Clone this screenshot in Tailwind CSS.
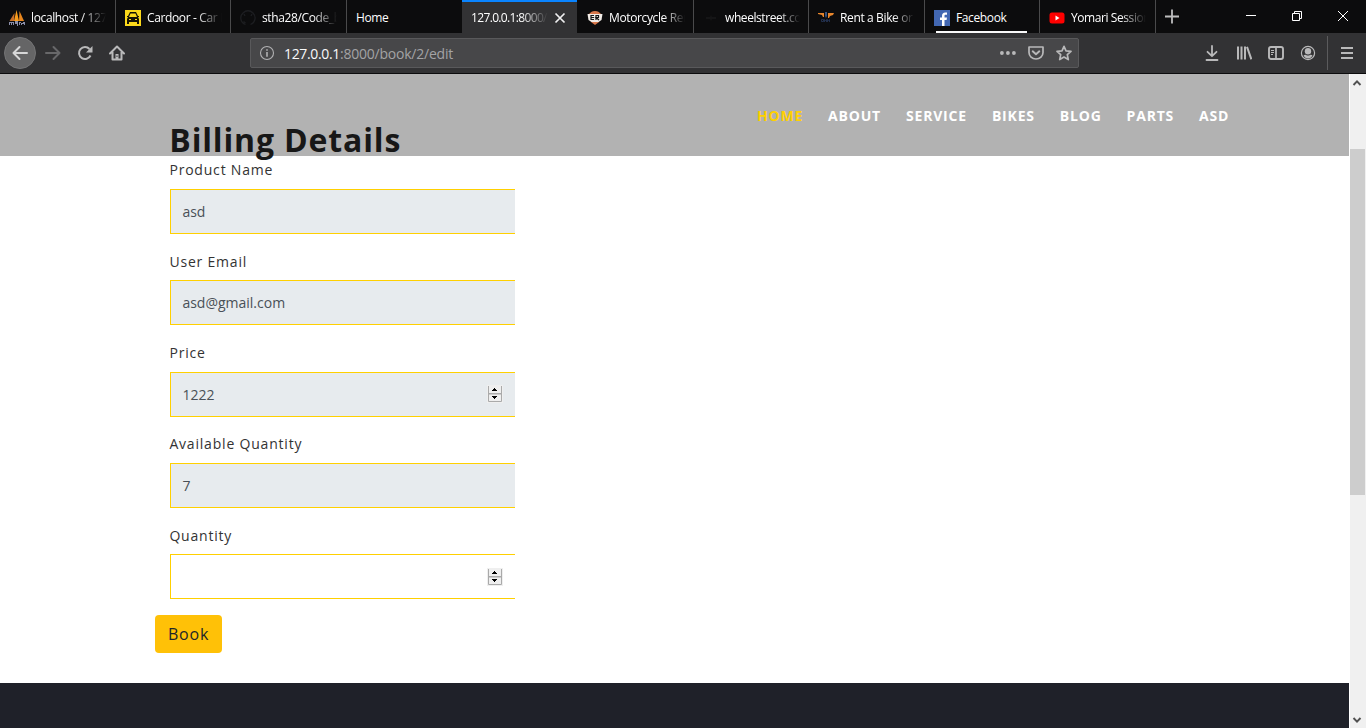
<!DOCTYPE html>
<html lang="en">
<head>
<meta charset="utf-8">
<title>Billing Details</title>
<script src="https://cdn.jsdelivr.net/npm/@tailwindcss/browser@4"></script>
</head>
<body class="w-[1366px] h-[728px] overflow-hidden flex flex-col bg-white font-['Open_Sans','Noto_Sans',sans-serif]">

<!-- Tab strip -->
<div class="h-[33px] shrink-0 flex bg-[#0c0c0d] text-white text-[12px] tracking-[-0.37px] whitespace-nowrap">
  <div class="w-[116px] shrink-0 border-r border-[#4a4a4b] flex items-center pl-[9px] pt-[2px]">
    <svg class="w-4 h-4 shrink-0" viewBox="0 0 16 16"><path d="M.5 11 5.500 3 5 11Z" fill="#c9702a"/><path d="M5 11 7.500 0l2.500 11Z" fill="#f89c1c"/><path d="M10 11 10.500 1l4.500 10Z" fill="#e8871e"/><path d="M0 12h5v3H4v-2H3v2H2v-2H1v2H0ZM6 11h3v5H8v-2H6ZM10 12h2v1h2v-1h2v3h-1v-1h-2v1h-1v-2h-1v2h-1Z" fill="#8a8da8"/></svg>
    <span class="ml-[6px] w-[75px] overflow-hidden [mask-image:linear-gradient(to_right,#000_66%,transparent)]">localhost / 127.0.0.1</span>
  </div>
  <div class="w-[115px] shrink-0 border-r border-[#4a4a4b] flex items-center pl-[9px] pt-[2px]">
    <svg class="w-4 h-4 shrink-0" viewBox="0 0 16 16"><path d="M0 0h16v16H0Z" fill="#fcd91b"/><path d="M5 2h6l2 4h1v1h-1l1 2v5h-2v-2H4v2H2V9l1-2H2V6h1Z" fill="#161304"/><path d="M5.500 3.500h5L12 7H4ZM4 9h2v1H4ZM10 9h2v1h-2Z" fill="#fcd91b"/></svg>
    <span class="ml-[6px] w-[75px] overflow-hidden [mask-image:linear-gradient(to_right,#000_66%,transparent)]">Cardoor - Car Rental</span>
  </div>
  <div class="w-[116px] shrink-0 border-r border-[#4a4a4b] flex items-center pl-[9px] pt-[2px]">
    <svg class="w-4 h-4 shrink-0" viewBox="0 0 16 16"><path d="M5.500 14.500C0 12.500-.5 6 3 3c3-3 7-3 10 0 3.500 3.500 2.500 9.500-2.500 11.500M3.500 11.500l2 1.500M4 4l1 2M12 4l-1 2" fill="none" stroke="#1d1e21" stroke-width="1.300"/></svg>
    <span class="ml-[6px] w-[75px] overflow-hidden [mask-image:linear-gradient(to_right,#000_68%,transparent)]">stha28/Code_blog</span>
  </div>
  <div class="w-[115px] shrink-0 flex items-center pl-[9px] pt-[2px]"><span>Home</span></div>
  <div class="w-[115px] shrink-0 bg-[#323234] border-t-2 border-[#0a84ff] flex items-center pl-[9px]">
    <span class="w-[77px] overflow-hidden tracking-[-0.65px] [mask-image:linear-gradient(to_right,#000_65%,transparent)]">127.0.0.1:8000/book</span>
    <svg class="ml-[6px] w-[12px] h-[12px]" viewBox="0 0 12 12"><path d="m1.500 1.500 9 9m0-9-9 9" stroke="#f0f0f1" stroke-width="1.700"/></svg>
  </div>
  <div class="w-[117px] shrink-0 border-r border-[#4a4a4b] flex items-center pl-[10px] pt-[2px]">
    <svg class="w-4 h-4 shrink-0" viewBox="0 0 16 16"><path d="M2 4C4 2 5 1 8 1s4 1 6 3l-2 8-4 3-4-3Z" fill="#d9784b"/><path d="M.5 4h15l-1 6-3 2h-7l-3-2Z" fill="#f1ece7"/><path d="M7 5.500H4v4h3M4 7.500h3M9 10V5.500h2.500v2H9l3 2.500" fill="none" stroke="#171717" stroke-width="1.200"/></svg>
    <span class="ml-[6px] w-[76px] overflow-hidden [mask-image:linear-gradient(to_right,#000_72%,transparent)]">Motorcycle Rental</span>
  </div>
  <div class="w-[115px] shrink-0 border-r border-[#4a4a4b] flex items-center pl-[9px] pt-[2px]">
    <svg class="w-4 h-4 shrink-0" viewBox="0 0 16 16"><path d="M3 7h4l1-2 1 2h4v2h-4l-1 2-1-2H3Z" fill="#151516"/></svg>
    <span class="ml-[6px] w-[75px] overflow-hidden tracking-[-0.42px] [mask-image:linear-gradient(to_right,#000_72%,transparent)]">wheelstreet.com</span>
  </div>
  <div class="w-[116px] shrink-0 border-r border-[#4a4a4b] flex items-center pl-[9px] pt-[2px]">
    <svg class="w-4 h-4 shrink-0" viewBox="0 0 16 16"><path d="M0 3h6v4H5L4 5 0 4ZM10 3h6l-1 2-3 1-1 2h-1Z" fill="#e8862c"/><path d="M7 2h2v4l-1 2-1-2Z" fill="#35507c"/><path d="M3.500 9.500h2v2h-2ZM6.500 12V9.500l1 1 1-1V12M9.500 12V9.500l1 1 1-1V12" fill="none" stroke="#27375a" stroke-width=".8"/></svg>
    <span class="ml-[6px] w-[74px] overflow-hidden [mask-image:linear-gradient(to_right,#000_72%,transparent)]">Rent a Bike or Scooter</span>
  </div>
  <div class="w-[115px] shrink-0 border-r border-[#4a4a4b] flex items-center pl-[9px] pt-[2px] relative">
    <svg class="w-4 h-4 shrink-0" viewBox="0 0 16 16"><path d="M0 0h16v16H0Z" fill="#4267b2"/><path d="M8 16v-6H6V7.500h2V6c0-2.300 1.200-3.500 3.300-3.500H13v2.200h-1.300c-1 0-1.200.5-1.200 1.300v1.500H13l-.4 2.500h-2.100v6Z" fill="#fff"/></svg>
    <span class="ml-[6px]">Facebook</span>
    <i class="absolute left-[11px] bottom-0 w-[91px] h-[2px] bg-[#f9f9fa]"></i>
  </div>
  <div class="w-[116px] shrink-0 border-r border-[#4a4a4b] flex items-center pl-[9px] pt-[2px]">
    <svg class="w-4 h-4 shrink-0" viewBox="0 0 16 16"><rect x=".5" y="2.500" width="15" height="11" rx="2.500" fill="#f00"/><path d="m6.500 5.500 4 2.500-4 2.500Z" fill="#fff"/></svg>
    <span class="ml-[6px] w-[75px] overflow-hidden tracking-[-0.42px] [mask-image:linear-gradient(to_right,#000_66%,transparent)]">Yomari Sessions</span>
  </div>
  <div class="flex-1 flex">
    <svg class="ml-[8px] mt-[9px] w-4 h-4" viewBox="0 0 16 16"><path d="M8 .500v14M1 7.500h14" stroke="#bdbdbe" stroke-width="1.800"/></svg>
    <svg class="ml-[65px] mt-[10px] w-[12px] h-[12px]" viewBox="0 0 12 12"><path d="M1 5.500h10" stroke="#fff"/></svg>
    <svg class="ml-[34px] mt-[10px] w-[12px] h-[12px]" viewBox="0 0 12 12"><path d="M1.500 3.500h7v7h-7ZM3.500 3V1.500h7v7H9" fill="none" stroke="#fff"/></svg>
    <svg class="ml-[34px] mt-[10px] w-[12px] h-[12px]" viewBox="0 0 12 12"><path d="m1 1 10 10M11 1 1 11" stroke="#fff"/></svg>
  </div>
</div>

<!-- Navigation toolbar -->
<div class="h-[41px] shrink-0 bg-[#323234] border-b border-[#0c0c0d] flex items-center text-[#b9b9ba]">
  <div class="ml-[4px] w-8 h-8 rounded-full bg-[#656566] border border-[#747475] flex items-center justify-center">
    <svg class="w-4 h-4" viewBox="0 0 16 16" fill="none" stroke="#d7d7d8" stroke-width="2" stroke-linecap="round" stroke-linejoin="round"><path d="M15 8H1.500M7.500 2l-6 6 6 6"/></svg>
  </div>
  <svg class="ml-[9px] w-4 h-4" viewBox="0 0 16 16" fill="none" stroke="#68686a" stroke-width="2" stroke-linecap="round" stroke-linejoin="round"><path d="M1 8h13.500M8.500 2l6 6-6 6"/></svg>
  <svg class="ml-4 w-4 h-4" viewBox="0 0 16 16"><path d="M13.500 10.500A6 6 0 1 1 12.500 4" fill="none" stroke="currentColor" stroke-width="2"/><path d="M15.500 1v6.500H9Z" fill="currentColor"/></svg>
  <svg class="ml-4 w-4 h-4" viewBox="0 0 16 16"><path d="M1 8.500 8 1.500l7 7M3.500 7v7.500h9V7" fill="none" stroke="currentColor" stroke-width="2" stroke-linecap="round" stroke-linejoin="round"/><path d="M6.500 9h3v6h-3Z" fill="currentColor"/><path d="M7.500 10.500h1V12h-1Z" fill="#323234"/></svg>
  <div class="ml-[125px] w-[829px] h-[30px] bg-[#474749] border border-[#59595b] rounded-[2px] flex items-center">
    <svg class="ml-[8px] w-4 h-4" viewBox="0 0 16 16"><circle cx="8" cy="8" r="6.500" fill="none" stroke="#b1b1b3" stroke-width="1.100"/><path d="M7.200 4.200h1.600v1.600H7.200ZM7.200 7h1.600v4.800H7.200Z" fill="#b1b1b3"/></svg>
    <span class="ml-[9px] mt-[2px] w-[716px] text-[14px] leading-[20px] tracking-[-0.35px] text-[#a3a3a5]"><span class="text-[#f9f9fa]">127.0.0.1</span><span class="tracking-[-0.22px]">:8000/book/2/edit</span></span>
    <svg class="w-4 h-4" viewBox="0 0 16 16" fill="#b9b9ba"><circle cx="1.900" cy="8" r="1.900"/><circle cx="7.900" cy="8" r="1.900"/><circle cx="13.900" cy="8" r="1.900"/></svg>
    <svg class="ml-[12px] w-4 h-4" viewBox="0 0 16 16" fill="none" stroke="#b9b9ba" stroke-linecap="round" stroke-linejoin="round"><path d="M1 2h14v5.500a7 6.500 0 0 1-14 0Z" stroke-width="1.700"/><path d="m4.700 6.300 3.300 3 3.300-3" stroke-width="1.900"/></svg>
    <svg class="ml-[12px] w-4 h-4" viewBox="0 0 16 16" fill="none" stroke="#b9b9ba" stroke-width="1.700" stroke-linejoin="round"><path d="m8 1.300 2 4.500 5 .5-3.700 3.300 1 5L8 12.100l-4.300 2.500 1-5L1 6.300l5-.5Z"/></svg>
  </div>
  <svg class="ml-[125px] w-4 h-4" viewBox="0 0 16 16" fill="none" stroke="currentColor" stroke-width="1.800" stroke-linecap="round" stroke-linejoin="round"><path d="M8 1v10M3.500 6.800 8 11.200l4.500-4.400M2.500 15h11"/></svg>
  <svg class="ml-4 w-4 h-4" viewBox="0 0 16 16" fill="none" stroke="currentColor" stroke-width="2"><path d="M2 1.500v13M5.500 1.500v13M9 1.500v13M11 1.800l4.400 12.500"/></svg>
  <svg class="ml-4 w-4 h-4" viewBox="0 0 16 16" fill="none" stroke="currentColor"><rect x="1" y="2" width="14" height="12" rx="2" stroke-width="1.900"/><path d="M8 2v12" stroke-width="1.700"/><path d="M3 5.500h3M3 7.500h3M3 9.500h2" stroke-width="1"/></svg>
  <svg class="ml-4 w-4 h-4" viewBox="0 0 16 16"><circle cx="8" cy="8" r="6.600" fill="none" stroke="currentColor" stroke-width="1.200"/><circle cx="8" cy="6.300" r="3.200" fill="currentColor"/><path d="M3.500 10.500c1-1 2-.8 2.500-.5 1.500.8 2.500.8 4 0 .5-.3 1.500-.5 2.500.5-1 2-2.500 3-4.500 3s-3.500-1-4.500-3Z" fill="currentColor"/></svg>
  <div class="ml-[11px] w-px h-[34px] bg-[#5b5b5d]"></div>
  <svg class="ml-[11px] w-4 h-4" viewBox="0 0 16 16"><path d="M2 3h12M2 8h12M2 13h12" stroke="currentColor" stroke-width="2"/></svg>
</div>

<!-- Viewport -->
<div class="flex-1 flex min-h-0">
  <div class="w-[1349px] flex flex-col">
    <header class="h-[82px] shrink-0 bg-[#b2b2b2]">
      <nav class="flex gap-[25px] pl-[757px] pt-[32px] text-[14px] leading-[20px] font-bold tracking-[0.8px] text-white">
        <a class="text-[#ffd000]">HOME</a><a>ABOUT</a><a>SERVICE</a><a>BIKES</a><a>BLOG</a><a>PARTS</a><a>ASD</a>
      </nav>
    </header>
    <main class="relative h-[563px] -mt-[36px] pl-[170px] shrink-0 text-[14px] tracking-[0.8px] text-[#333]">
      <h1 class="h-[40px] -ml-[0.7px] text-[32px] leading-[40px] font-bold tracking-[0.84px] text-[#171717]">Billing Details</h1>
      <div class="h-[91.35px] w-[345px]">
        <div class="h-[29px] -ml-[0.6px] pt-[0.2px] leading-[20px]">Product Name</div>
        <div class="h-[45px] bg-[#e7ebee] border-y border-l border-[#ffd000] pl-[11.4px] leading-[43px] tracking-normal text-[#495057]">asd</div>
      </div>
      <div class="h-[91.35px] w-[345px]">
        <div class="h-[29px] -ml-[0.6px] pt-[0.2px] leading-[20px]">User Email</div>
        <div class="h-[45px] bg-[#e7ebee] border-y border-l border-[#ffd000] pl-[11.4px] leading-[43px] tracking-normal text-[#495057]">asd@gmail.com</div>
      </div>
      <div class="h-[91.35px] w-[345px]">
        <div class="h-[29px] -ml-[0.6px] pt-[0.2px] leading-[20px]">Price</div>
        <div class="h-[45px] bg-[#e7ebee] border-y border-l border-[#ffd000] pl-[11.4px] pr-[12px] leading-[43px] tracking-normal text-[#495057] flex items-center justify-between">1222
          <svg class="w-4 h-[18px]" viewBox="0 0 16 18"><path d="M0 0h16v18H0Z" fill="#efefef"/><path d="M1.500 1v15.500h13V1M1 9h14" fill="none" stroke="#aaa"/><path d="M1 8.500h14" stroke="#aaa"/><path d="M5 6V5h1V4h1V3h1v1h1v1h1v1ZM5 11h5v1H9v1H8v1H7v-1H6v-1H5Z" fill="#000" shape-rendering="crispEdges"/></svg>
        </div>
      </div>
      <div class="h-[91.35px] w-[345px]">
        <div class="h-[29px] -ml-[0.6px] pt-[0.2px] leading-[20px]">Available Quantity</div>
        <div class="h-[45px] bg-[#e7ebee] border-y border-l border-[#ffd000] pl-[11.4px] leading-[43px] tracking-normal text-[#495057]">7</div>
      </div>
      <div class="h-[91.35px] w-[345px]">
        <div class="h-[29px] -ml-[0.6px] pt-[0.2px] leading-[20px]">Quantity</div>
        <div class="h-[45px] bg-white border-y border-l border-[#ffd000] pr-[12px] flex items-center justify-end">
          <svg class="w-4 h-[18px]" viewBox="0 0 16 18"><path d="M0 0h16v18H0Z" fill="#efefef"/><path d="M1.500 1v15.500h13V1M1 9h14" fill="none" stroke="#aaa"/><path d="M1 8.500h14" stroke="#aaa"/><path d="M5 6V5h1V4h1V3h1v1h1v1h1v1ZM5 11h5v1H9v1H8v1H7v-1H6v-1H5Z" fill="#000" shape-rendering="crispEdges"/></svg>
        </div>
      </div>
      <button class="block -ml-[15px] -mt-[1.75px] w-[67px] h-[38px] rounded-[4px] bg-[#ffc107] text-[16px] leading-[38px] tracking-[0.8px] text-[#212529]">Book</button>
    </main>
    <footer class="flex-1 bg-[#1f2129]"></footer>
  </div>
  <!-- Scrollbar -->
  <div class="w-[17px] pl-px bg-white">
    <div class="h-full bg-[#f0f0f0] flex flex-col items-center">
      <svg class="w-[10px] h-[8px] mt-[5px] -ml-[2px] shrink-0" viewBox="0 0 10 8"><path d="m1.500 6 3.500-3.700L8.500 6" fill="none" stroke="#505050" stroke-width="1.900"/></svg>
      <div class="mt-[62px] w-[15px] h-[346px] bg-[#cdcdcd] self-start shrink-0"></div>
      <svg class="w-[10px] h-[8px] mt-auto mb-[4px] -ml-[2px] shrink-0" viewBox="0 0 10 8"><path d="M1.500 2 5 5.700 8.500 2" fill="none" stroke="#505050" stroke-width="1.900"/></svg>
    </div>
  </div>
</div>
</body>
</html>
